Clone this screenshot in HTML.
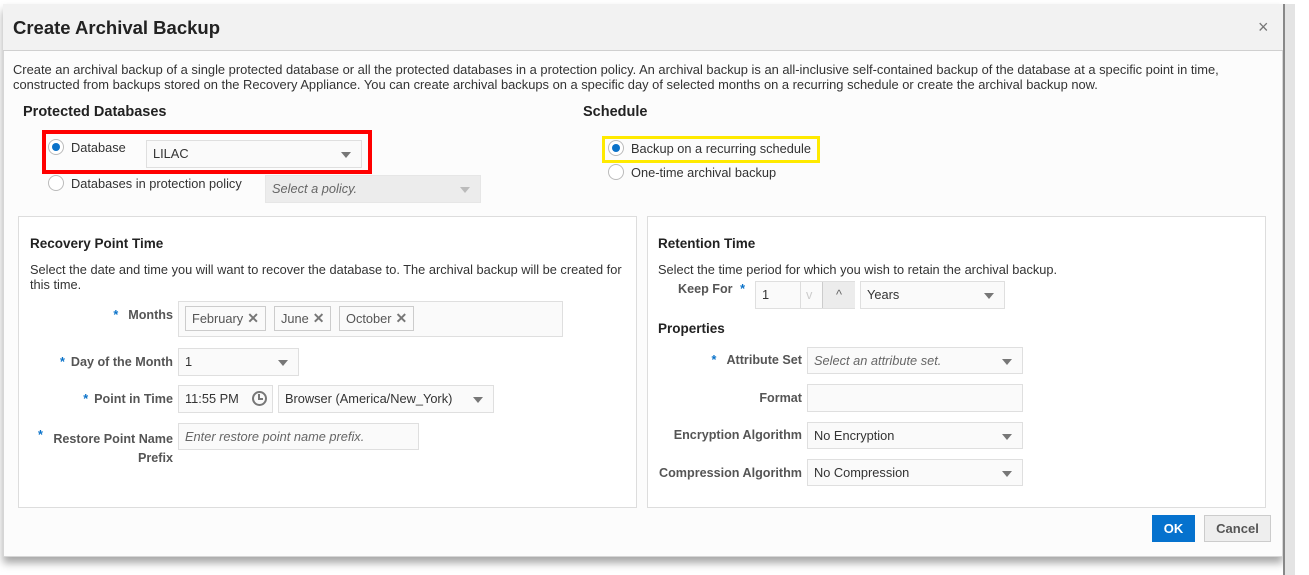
<!DOCTYPE html>
<html><head><style>
*{box-sizing:border-box;margin:0;padding:0}
body{width:1309px;height:575px;background:#fff;position:relative;overflow:hidden;font-family:"Liberation Sans",sans-serif;color:#333;font-size:12.8px}
.a{position:absolute;white-space:nowrap}
.dlg{position:absolute;left:3px;top:4px;width:1280px;height:553px;background:#fcfcfc;border:1px solid #d6d6d6;box-shadow:0 6px 8px rgba(0,0,0,.35)}
.hdr{position:absolute;left:3px;top:4px;width:1280px;height:47px;background:#f2f2f2;border-bottom:1px solid #d0d0d0}
.h{font-weight:bold;font-size:14.5px;color:#222}
.lbl{font-weight:bold;color:#555;text-align:right;font-size:12.6px}
.inp{position:absolute;background:#fafafa;border:1px solid #dfdfdf;height:28px;line-height:26px;padding-left:6px;color:#333}
.ph{font-style:italic;color:#666}
.tri{position:absolute;right:10px;top:11px;width:0;height:0;border-left:5px solid transparent;border-right:5px solid transparent;border-top:6px solid #777}
.rad{position:absolute;width:16px;height:16px;border-radius:50%;border:1px solid #bbb;background:#fff}
.rad.on::after{content:"";position:absolute;left:3px;top:3px;width:8px;height:8px;border-radius:50%;background:#0a72c9}
.star{color:#0a72c9;font-weight:bold}
.panel{position:absolute;background:#fff;border:1px solid #ddd}
.chip{position:absolute;top:4px;height:25px;border:1px solid #ccc;background:#fafafa;line-height:23px;padding:0 6px;color:#555;white-space:nowrap}
.chip b{color:#777;font-size:14px;margin-left:4px}
</style></head><body>
<div class="dlg"></div>
<div class="hdr"></div>
<div style="position:absolute;left:1283px;top:4px;width:2px;height:571px;background:#888"></div>
<div style="position:absolute;left:1285px;top:4px;width:10px;height:571px;background:#e4e4e4"></div>
<div class="a" style="left:13px;top:17px;font-size:18.5px;font-weight:bold;color:#222">Create Archival Backup</div>
<div class="a" style="left:1258px;top:17px;font-size:18px;color:#777">×</div>
<div class="a" style="left:13px;top:62px;line-height:15px;color:#333;font-size:12.9px">Create an archival backup of a single protected database or all the protected databases in a protection policy. An archival backup is an all-inclusive self-contained backup of the database at a specific point in time,<br>constructed from backups stored on the Recovery Appliance. You can create archival backups on a specific day of selected months on a recurring schedule or create the archival backup now.</div>
<div class="a h" style="left:23px;top:104px">Protected Databases</div>
<div class="a h" style="left:583px;top:104px">Schedule</div>

<div style="position:absolute;left:42px;top:130px;width:330px;height:44px;border:4px solid #f00"></div>
<div class="rad on" style="left:48px;top:139px"></div>
<div class="a" style="left:71px;top:140px">Database</div>
<div class="inp" style="left:146px;top:140px;width:216px">LILAC<span class="tri"></span></div>
<div class="rad" style="left:48px;top:175px"></div>
<div class="a" style="left:71px;top:176px">Databases in protection policy</div>
<div class="inp ph" style="left:265px;top:175px;width:216px;background:#ececec;border-color:#e6e6e6">Select a policy.<span class="tri" style="border-top-color:#bbb"></span></div>

<div style="position:absolute;left:602px;top:136px;width:218px;height:27px;border:3px solid #ffea00"></div>
<div class="rad on" style="left:608px;top:140px"></div>
<div class="a" style="left:631px;top:141px">Backup on a recurring schedule</div>
<div class="rad" style="left:608px;top:164px"></div>
<div class="a" style="left:631px;top:165px">One-time archival backup</div>

<div class="panel" style="left:18px;top:216px;width:619px;height:292px"></div>
<div class="a h" style="left:30px;top:236px;font-size:13.5px">Recovery Point Time</div>
<div class="a" style="left:30px;top:262px;line-height:15px">Select the date and time you will want to recover the database to. The archival backup will be created for<br>this time.</div>
<div class="a lbl" style="left:40px;top:308px;width:133px"><span class="star" style="margin-right:10px">*</span>Months</div>
<div class="inp" style="left:178px;top:301px;width:385px;height:36px">
<div class="chip" style="left:6px">February<b>✕</b></div>
<div class="chip" style="left:95px">June<b>✕</b></div>
<div class="chip" style="left:160px">October<b>✕</b></div></div>
<div class="a lbl" style="left:40px;top:355px;width:133px"><span class="star" style="margin-right:6px">*</span>Day of the Month</div>
<div class="inp" style="left:178px;top:348px;width:121px">1<span class="tri"></span></div>
<div class="a lbl" style="left:40px;top:392px;width:133px"><span class="star" style="margin-right:6px">*</span>Point in Time</div>
<div class="inp" style="left:178px;top:385px;width:95px">11:55 PM<span style="position:absolute;right:5px;top:5px;width:15px;height:15px;border:2px solid #777;border-radius:50%"><span style="position:absolute;left:4px;top:1px;width:5px;height:6px;border-left:2px solid #777;border-bottom:2px solid #777"></span></span></div>
<div class="inp" style="left:278px;top:385px;width:216px">Browser (America/New_York)<span class="tri"></span></div>
<div class="a lbl" style="left:30px;top:430px;width:143px;line-height:19px"><span class="star" style="position:absolute;left:8px;top:-4px">*</span>Restore Point Name<br>Prefix</div>
<div class="inp ph" style="left:178px;top:423px;width:241px;height:27px">Enter restore point name prefix.</div>

<div class="panel" style="left:647px;top:216px;width:619px;height:292px"></div>
<div class="a h" style="left:658px;top:236px;font-size:13.5px">Retention Time</div>
<div class="a" style="left:658px;top:262px">Select the time period for which you wish to retain the archival backup.</div>
<div class="a lbl" style="left:678px;top:282px">Keep For <span class="star" style="margin-left:4px">*</span></div>
<div class="inp" style="left:755px;top:281px;width:100px">1
<span style="position:absolute;left:44px;top:0;width:1px;height:26px;background:#ddd"></span>
<span style="position:absolute;left:66px;top:0;width:33px;height:26px;background:#ececec;border-left:1px solid #ccc;text-align:center;color:#666">^</span>
<span style="position:absolute;left:50px;top:0;color:#ccc">v</span></div>
<div class="inp" style="left:860px;top:281px;width:145px">Years<span class="tri"></span></div>
<div class="a h" style="left:658px;top:321px;font-size:13.5px">Properties</div>
<div class="a lbl" style="left:650px;top:353px;width:152px"><span class="star" style="margin-right:10px">*</span>Attribute Set</div>
<div class="inp ph" style="left:807px;top:347px;width:216px;height:27px">Select an attribute set.<span class="tri"></span></div>
<div class="a lbl" style="left:650px;top:391px;width:152px">Format</div>
<div class="inp" style="left:807px;top:384px;width:216px"></div>
<div class="a lbl" style="left:650px;top:428px;width:152px">Encryption Algorithm</div>
<div class="inp" style="left:807px;top:422px;width:216px;height:27px">No Encryption<span class="tri"></span></div>
<div class="a lbl" style="left:650px;top:466px;width:152px">Compression Algorithm</div>
<div class="inp" style="left:807px;top:459px;width:216px;height:27px">No Compression<span class="tri"></span></div>

<div class="a" style="left:1152px;top:515px;width:43px;height:27px;background:#0572ce;color:#fff;font-weight:bold;text-align:center;line-height:27px;font-size:13px">OK</div>
<div class="a" style="left:1204px;top:515px;width:67px;height:27px;background:#eee;border:1px solid #ccc;color:#555;font-weight:bold;text-align:center;line-height:25px;font-size:13px">Cancel</div>
</body></html>
